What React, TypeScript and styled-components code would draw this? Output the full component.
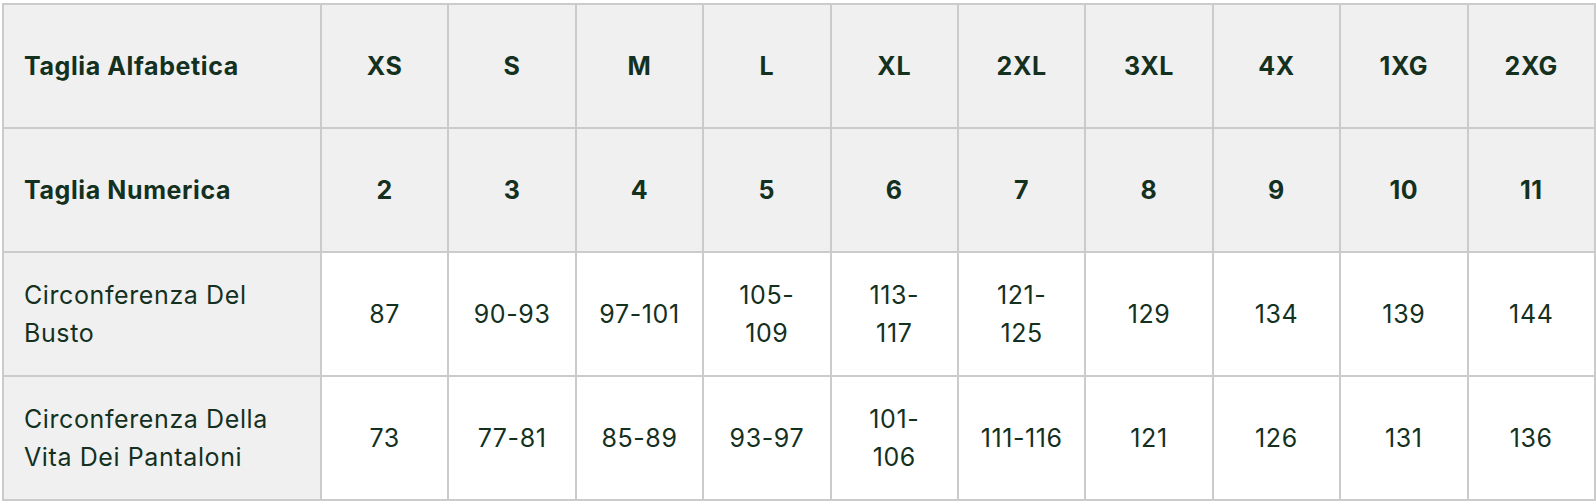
import React from "react";
import styled, { createGlobalStyle } from "styled-components";

const GlobalStyle = createGlobalStyle`
  html, body {
    margin: 0;
    padding: 0;
    background: #ffffff;
  }
  body {
    font-family: Inter, "Noto Sans", "Liberation Sans", sans-serif;
  }
`;

const Wrapper = styled.div`
  padding: 3px 0 0 2px;
`;

const Table = styled.table`
  width: 1594px;
  table-layout: fixed;
  border-collapse: collapse;
  color: #14301f;
  font-family: Inter, "Noto Sans", "Liberation Sans", sans-serif;
  font-size: 25px;
  line-height: 38px;
  letter-spacing: 0.6px;
`;

const Row = styled.tr`
  height: 124px;
`;

const Cell = styled.td<{ $head?: boolean; $label?: boolean }>`
  border: 2px solid #cbcbcb;
  padding: 0 20px;
  vertical-align: middle;
  text-align: ${(p) => (p.$label ? "left" : "center")};
  background: ${(p) => (p.$head || p.$label ? "#f0f0f0" : "#ffffff")};
  font-weight: ${(p) => (p.$head ? 700 : 400)};
`;

const Line = styled.span`
  display: block;
`;

const headRows = [
  ["Taglia Alfabetica", "XS", "S", "M", "L", "XL", "2XL", "3XL", "4X", "1XG", "2XG"],
  ["Taglia Numerica", "2", "3", "4", "5", "6", "7", "8", "9", "10", "11"],
];

const bodyRows: (string | string[])[][] = [
  [
    "Circonferenza Del Busto",
    "87",
    "90-93",
    "97-101",
    ["105-", "109"],
    ["113-", "117"],
    ["121-", "125"],
    "129",
    "134",
    "139",
    "144",
  ],
  [
    "Circonferenza Della Vita Dei Pantaloni",
    "73",
    "77-81",
    "85-89",
    "93-97",
    ["101-", "106"],
    "111-116",
    "121",
    "126",
    "131",
    "136",
  ],
];

const renderValue = (v: string | string[]) =>
  Array.isArray(v) ? v.map((l, k) => <Line key={k}>{l}</Line>) : v;

export default function App() {
  return (
    <>
      <GlobalStyle />
      <Wrapper>
        <Table>
          <colgroup>
            <col style={{ width: 318 }} />
            {Array.from({ length: 10 }).map((_, i) => (
              <col key={i} />
            ))}
          </colgroup>
          <tbody>
            {headRows.map((r, i) => (
              <Row key={"h" + i}>
                {r.map((c, j) => (
                  <Cell key={j} $head $label={j === 0}>
                    {c}
                  </Cell>
                ))}
              </Row>
            ))}
            {bodyRows.map((r, i) => (
              <Row key={"b" + i}>
                {r.map((c, j) => (
                  <Cell key={j} $label={j === 0}>
                    {renderValue(c)}
                  </Cell>
                ))}
              </Row>
            ))}
          </tbody>
        </Table>
      </Wrapper>
    </>
  );
}
